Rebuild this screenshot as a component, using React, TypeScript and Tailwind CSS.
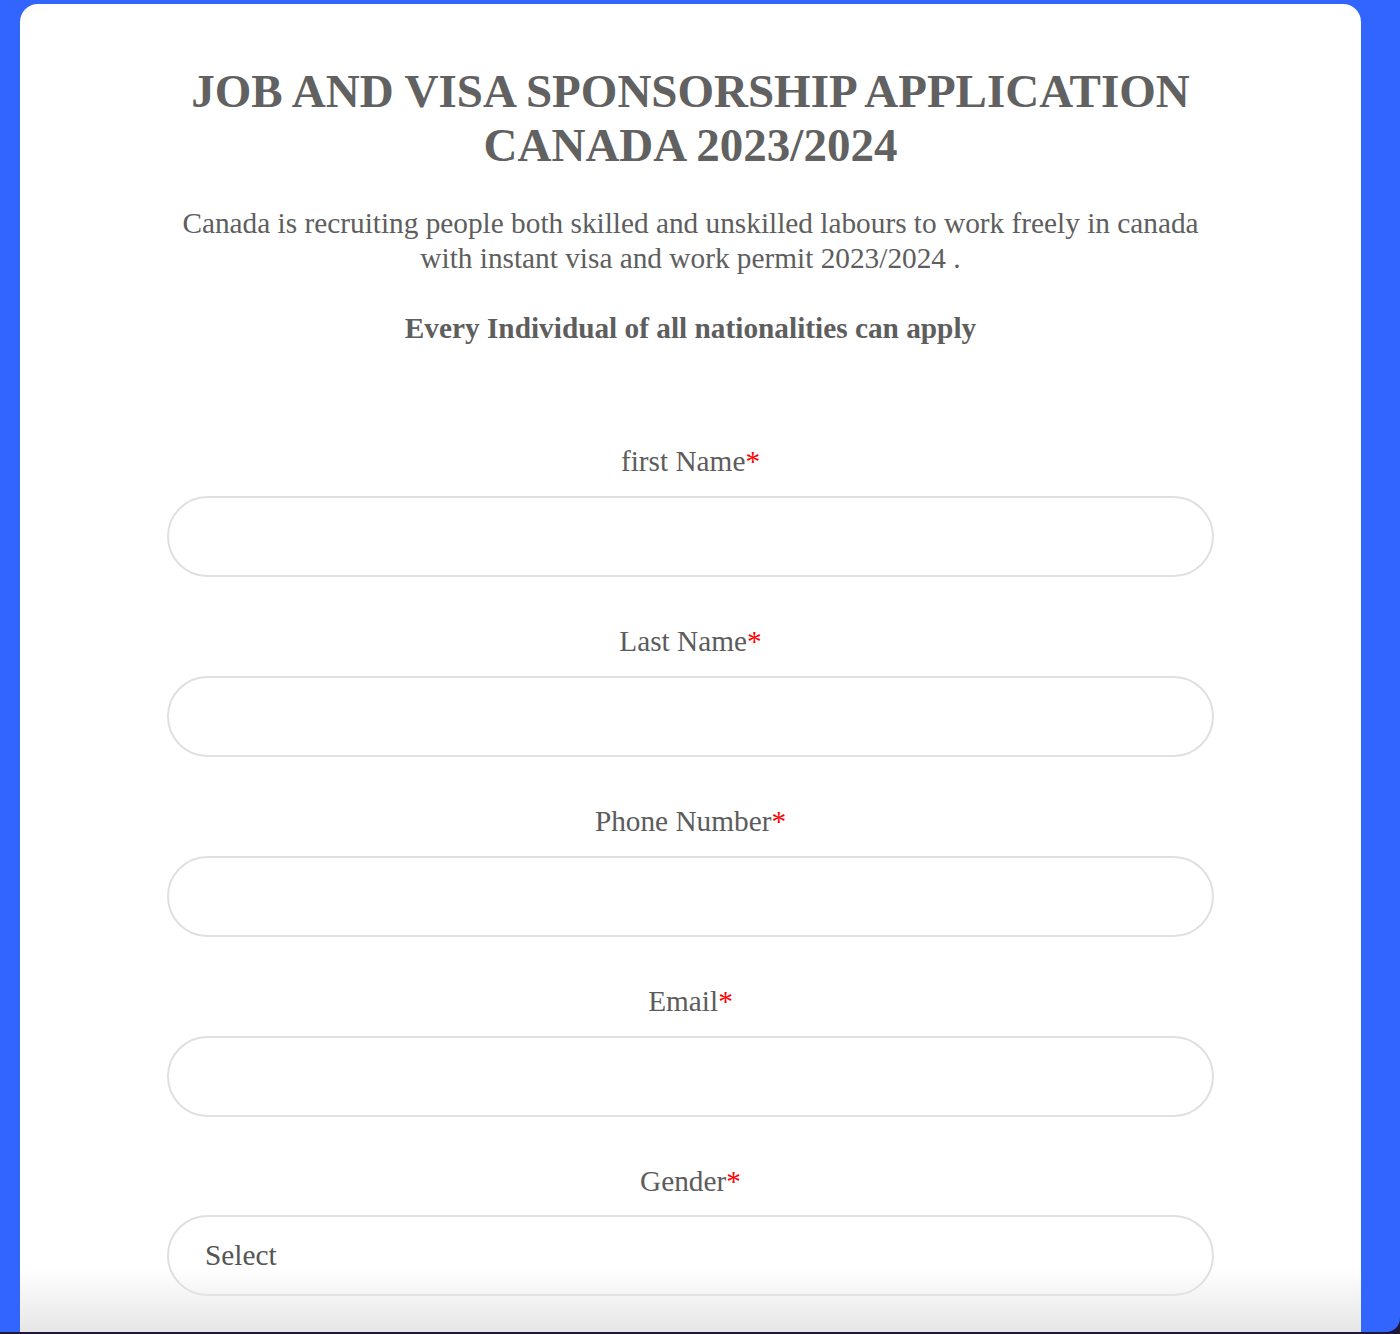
import React from "react";

const serif = { fontFamily: '"Liberation Serif", "Times New Roman", serif' };

function Field({ label, children }: { label: string; children?: React.ReactNode }) {
  return (
    <div className="flex flex-col items-center">
      <label className="text-[29.3px] leading-[35.2px] text-[#5c5c5c]">
        {label}
        <span className="text-[#ff0000]">*</span>
      </label>
      <div className="mt-[16.6px] w-full">
        {children ?? (
          <input
            type="text"
            className="block h-[81px] w-full rounded-full border-2 border-[#e0e0e0] bg-white px-[36px] text-[29.3px] text-[#555] outline-none"
            style={serif}
          />
        )}
      </div>
    </div>
  );
}

export default function App() {
  return (
    <div className="h-[1334px] w-[1400px] overflow-hidden bg-[#221636]" style={serif}>
      <div className="h-[1332px] w-full overflow-hidden rounded-br-[14px] bg-[#3165fe] pt-[4px]">
        <div className="relative ml-[20px] h-[1328px] w-[1341px] overflow-hidden rounded-t-[18px] bg-white">
          <div className="mx-auto w-[1047px] pt-[61px] text-center">
            <h1 className="text-[47px] font-bold leading-[53.5px] text-[#616161]">
              JOB AND VISA SPONSORSHIP APPLICATION
              <br />
              CANADA 2023/2024
            </h1>
            <p className="mt-[34px] text-[29.3px] leading-[35.2px] text-[#5e5e5e]">
              Canada is recruiting people both skilled and unskilled labours to work freely in canada with instant visa and work permit 2023/2024 .
            </p>
            <p className="mt-[34.8px] text-[29.3px] font-bold leading-[35.2px] text-[#5e5e5e]">
              Every Individual of all nationalities can apply
            </p>

            <div className="mt-[98px] flex flex-col gap-[47px]">
              <Field label="first Name" />
              <Field label="Last Name" />
              <Field label="Phone Number" />
              <Field label="Email" />
              <Field label="Gender">
                <select
                  className="block h-[81px] w-full appearance-none rounded-full border-2 border-[#e0e0e0] bg-white pl-[36px] text-[29.3px] text-[#555] outline-none"
                  style={serif}
                  defaultValue=""
                >
                  <option value="">Select</option>
                  <option value="male">Male</option>
                  <option value="female">Female</option>
                </select>
              </Field>
            </div>
          </div>
          <div className="pointer-events-none absolute bottom-0 left-0 right-0 h-[64px] bg-gradient-to-b from-[rgba(255,255,255,0)] to-[#e6e6e6]" />
        </div>
      </div>
    </div>
  );
}
